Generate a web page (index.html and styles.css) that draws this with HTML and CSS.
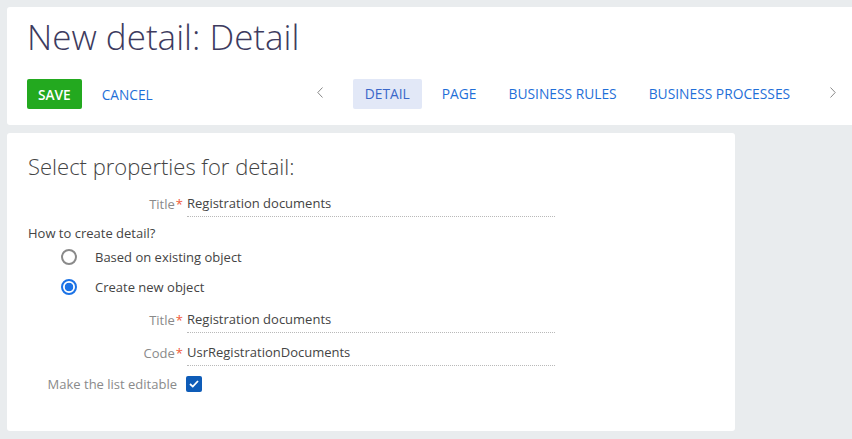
FILE: index.html
```html
<!DOCTYPE html>
<html lang="en">
<head>
    <meta charset="UTF-8">
    <title>New detail: Detail</title>
    <link rel="stylesheet" href="styles.css">
</head>
<body>
    <div class="header">
        <h1 class="page-title">New detail: Detail</h1>
        <div class="toolbar">
            <button class="btn-save">SAVE</button>
            <button class="btn-cancel">CANCEL</button>
            <div class="tabs">
                <span class="chevron">
                    <svg width="6" height="11" viewBox="0 0 6 11"><path d="M5.5 0.5 L0.8 5.5 L5.5 10.5" fill="none" stroke="#888" stroke-width="1"/></svg>
                </span>
                <span class="tab active">DETAIL</span>
                <span class="tab">PAGE</span>
                <span class="tab">BUSINESS RULES</span>
                <span class="tab">BUSINESS PROCESSES</span>
                <span class="chevron right">
                    <svg width="6" height="11" viewBox="0 0 6 11"><path d="M0.5 0.5 L5.2 5.5 L0.5 10.5" fill="none" stroke="#888" stroke-width="1"/></svg>
                </span>
            </div>
        </div>
    </div>

    <div class="card">
        <h2 class="card-title">Select properties for detail:</h2>
        <div class="field">
            <label class="field-label">Title<span class="req">*</span></label>
            <div class="field-value">Registration documents</div>
        </div>
        <p class="question">How to create detail?</p>
        <div class="radio-row">
            <span class="radio"></span>
            <span>Based on existing object</span>
        </div>
        <div class="radio-row">
            <span class="radio checked"></span>
            <span>Create new object</span>
        </div>
        <div class="field sub first">
            <label class="field-label">Title<span class="req">*</span></label>
            <div class="field-value">Registration documents</div>
        </div>
        <div class="field sub">
            <label class="field-label">Code<span class="req">*</span></label>
            <div class="field-value">UsrRegistrationDocuments</div>
        </div>
        <div class="field check">
            <label class="field-label">Make the list editable</label>
            <span class="checkbox">
                <svg width="10" height="8" viewBox="0 0 10 8"><path d="M1 4 L3.8 6.6 L9 1" fill="none" stroke="#fff" stroke-width="1.8"/></svg>
            </span>
        </div>
    </div>
</body>
</html>
```

FILE: styles.css
```css
body {
    font-family: "Open Sans", Arial, sans-serif;
    background-color: #e9ecee;
    margin: 0;
    padding: 7px 0 0 7px;
    color: #444;
    font-size: 13px;
}
.header {
    background-color: #fff;
    height: 118px;
    padding-left: 20px;
    border-radius: 3px 0 0 3px;
    box-sizing: border-box;
}
.page-title {
    margin: 0;
    padding-top: 6px;
    font-size: 35px;
    font-weight: 300;
    color: #3d3b5e;
    line-height: 48px;
    height: 66px;
}
.toolbar {
    display: flex;
    align-items: center;
    height: 30px;
}
.btn-save {
    height: 30px;
    padding: 0 11px;
    background-color: #23a91f;
    color: #fff;
    border: none;
    border-radius: 2px;
    font-family: inherit;
    font-size: 13.7px;
    font-weight: 600;
}
.btn-cancel {
    height: 30px;
    margin-left: 9px;
    padding: 0 11px;
    background: none;
    border: none;
    color: #1f6fd8;
    font-family: inherit;
    font-size: 13.7px;
}
.tabs {
    display: flex;
    align-items: center;
    margin-left: 153px;
    height: 30px;
}
.chevron {
    display: flex;
    align-items: center;
    margin-top: -4px;
    width: 36px;
    flex-shrink: 0;
}
.chevron.right {
    margin-left: 20px;
}
.tab {
    height: 30px;
    line-height: 30px;
    padding: 0 12px;
    margin-right: 8px;
    color: #1f6fd8;
    font-size: 13.8px;
    border-radius: 2px;
    white-space: nowrap;
    flex-shrink: 0;
}
.tab.active {
    background-color: #e2e8f7;
    color: #3a67c9;
}
.card {
    background-color: #fff;
    width: 728px;
    height: 298px;
    margin-top: 8px;
    padding: 0 0 0 21px;
    box-sizing: border-box;
    border-radius: 3px;
}
.card-title {
    margin: 0;
    padding-top: 19px;
    height: 60px;
    box-sizing: border-box;
    font-size: 22px;
    font-weight: 300;
    line-height: 28px;
    color: #444;
}
.field {
    display: flex;
    align-items: flex-end;
    height: 24px;
}
.field.sub {
    margin-top: 9px;
}
.field.sub.first {
    margin-top: 7px;
}
.field-label {
    width: 155px;
    text-align: right;
    color: #8a8a8a;
    padding-bottom: 4px;
    white-space: nowrap;
}
.req {
    color: #f05a3a;
    margin-left: 1px;
}
.field-value {
    margin-left: 4px;
    width: 368px;
    padding-bottom: 4px;
    border-bottom: 1px dotted #b9b9b9;
    color: #444;
}
.question {
    margin: 7px 0 0;
    line-height: 18px;
}
.radio-row {
    display: flex;
    align-items: center;
    height: 30px;
    margin-left: 33px;
}
.radio {
    width: 12px;
    height: 12px;
    border: 2px solid #8a8a8a;
    border-radius: 50%;
    margin-right: 18px;
    box-sizing: content-box;
}
.radio.checked {
    border-color: #1c73e6;
    background: radial-gradient(circle, #1c73e6 0 4px, #fff 4.6px);
}
.field.check {
    margin-top: 6px;
    align-items: center;
}
.field.check .field-label {
    width: 149px;
    padding-bottom: 0;
}
.checkbox {
    margin-left: 9px;
    width: 16px;
    height: 16px;
    border-radius: 2px;
    background-color: #0e5cb8;
    display: flex;
    align-items: center;
    justify-content: center;
}
```
